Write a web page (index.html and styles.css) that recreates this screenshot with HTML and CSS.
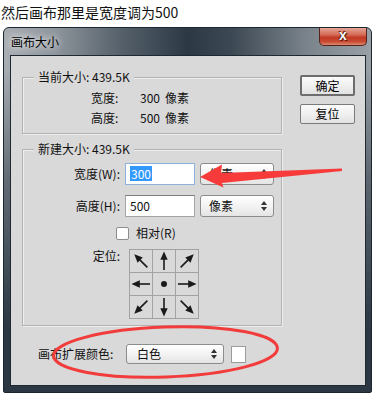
FILE: index.html
```html
<!DOCTYPE html>
<html lang="zh-CN">
<head>
<meta charset="utf-8">
<title>画布大小</title>
<link rel="stylesheet" href="styles.css">
</head>
<body>
<svg class="defs" width="0" height="0" aria-hidden="true">
  <defs>
    <g id="arr">
      <polygon points="11,1.5 7.3,9.8 14.7,9.8" fill="#1a1a1a"/>
      <line x1="11" y1="9" x2="11" y2="20" stroke="#1a1a1a" stroke-width="1.6"/>
    </g>
    <g id="updown">
      <polygon points="3,0 6,4 0,4" fill="#333"/>
      <polygon points="0,6 6,6 3,10" fill="#333"/>
    </g>
  </defs>
</svg>

<div class="caption">然后画布那里是宽度调为500</div>

<div class="window">
  <div class="titlebar">
    <span class="title">画布大小</span>
    <span class="close">x</span>
  </div>
  <div class="client">
    <div class="main">
      <div class="group g1">
        <span class="legend">当前大小: 439.5K</span>
        <div class="info-row"><span class="info-lbl">宽度:</span><span class="num">300</span><span>像素</span></div>
        <div class="info-row"><span class="info-lbl">高度:</span><span class="num">500</span><span>像素</span></div>
      </div>

      <div class="group g2">
        <span class="legend">新建大小: 439.5K</span>
        <div class="form-row">
          <span class="lbl">宽度(W):</span>
          <div class="input focus"><span class="hl">300</span></div>
          <div class="select unit"><span class="val">像素</span><svg class="ud" viewBox="0 0 6 10"><use href="#updown"/></svg></div>
        </div>
        <div class="form-row r2">
          <span class="lbl">高度(H):</span>
          <div class="input"><span>500</span></div>
          <div class="select unit"><span class="val">像素</span><svg class="ud" viewBox="0 0 6 10"><use href="#updown"/></svg></div>
        </div>
        <div class="check-row">
          <span class="checkbox"></span>
          <span class="check-label">相对(R)</span>
        </div>
        <div class="anchor-row">
          <span class="lbl">定位:</span>
          <div class="grid">
            <div class="cell"><svg viewBox="0 0 22 22"><use href="#arr" transform="rotate(-45 11 11)"/></svg></div>
            <div class="cell"><svg viewBox="0 0 22 22"><use href="#arr"/></svg></div>
            <div class="cell"><svg viewBox="0 0 22 22"><use href="#arr" transform="rotate(45 11 11)"/></svg></div>
            <div class="cell"><svg viewBox="0 0 22 22"><use href="#arr" transform="rotate(-90 11 11)"/></svg></div>
            <div class="cell"><svg viewBox="0 0 22 22"><circle cx="11" cy="11" r="3" fill="#1a1a1a"/></svg></div>
            <div class="cell"><svg viewBox="0 0 22 22"><use href="#arr" transform="rotate(90 11 11)"/></svg></div>
            <div class="cell"><svg viewBox="0 0 22 22"><use href="#arr" transform="rotate(-135 11 11)"/></svg></div>
            <div class="cell"><svg viewBox="0 0 22 22"><use href="#arr" transform="rotate(180 11 11)"/></svg></div>
            <div class="cell"><svg viewBox="0 0 22 22"><use href="#arr" transform="rotate(135 11 11)"/></svg></div>
          </div>
        </div>
      </div>

      <div class="ext-row">
        <span class="ext-lbl">画布扩展颜色:</span>
        <div class="select color"><span class="val">白色</span><svg class="ud" viewBox="0 0 6 10"><use href="#updown"/></svg></div>
        <span class="swatch"></span>
      </div>
    </div>

    <div class="buttons">
      <div class="btn default">确定</div>
      <div class="btn">复位</div>
    </div>
  </div>
</div>

<svg class="annot" width="373" height="395" viewBox="0 0 373 395" aria-hidden="true">
  <polygon points="200,177 222,164.5 221,173 342,168.5 342,171 222,183 223.5,187.5" fill="#f73b3b"/>
  <ellipse cx="165.5" cy="352" rx="112" ry="25" transform="rotate(-2 165.5 352)" fill="none" stroke="#f23c3c" stroke-width="3"/>
</svg>
</body>
</html>
```

FILE: styles.css
```css
* { box-sizing: border-box; }

html, body {
  margin: 0;
  padding: 0;
  background: #ffffff;
}

body {
  position: relative;
  width: 373px;
  height: 395px;
  overflow: hidden;
  font-family: "Noto Sans CJK SC", "Noto Sans", sans-serif;
  font-size: 12px;
  color: #111;
}

.defs { position: absolute; width: 0; height: 0; }

.caption {
  height: 27px;
  padding-left: 1px;
  font-size: 14px;
  line-height: 24px;
  color: #111;
}

.window {
  margin-left: 3px;
  width: 369px;
  height: 366px;
  border-radius: 6px 6px 2px 2px;
  border: 1px solid #1d2731;
  background:
    linear-gradient(to bottom, rgba(44,56,68,0) 0, rgba(44,56,68,0) 40px, rgba(44,56,68,0.55) 150px, #2b3743 300px),
    linear-gradient(90deg, #a9aeb3 0%, #8e959c 14%, #55606a 32%, #2c3945 50%, #3c4853 62%, #79828a 82%, #9aa0a6 100%);
  display: flex;
  flex-direction: column;
}

.titlebar {
  height: 27px;
  display: flex;
  align-items: flex-start;
  justify-content: space-between;
}

.title {
  margin-left: 7px;
  line-height: 27px;
  font-size: 12px;
  color: #000;
  text-shadow: 0 0 6px rgba(255,255,255,0.9), 0 0 10px rgba(255,255,255,0.7);
}

.close {
  width: 48px;
  height: 18px;
  margin-right: 4px;
  border: 1px solid #52231c;
  border-top: none;
  border-radius: 0 0 5px 5px;
  background: linear-gradient(to bottom, #e4a697 0%, #d56a55 40%, #c23a24 55%, #c84a32 80%, #de8a6e 100%);
  color: #fff;
  font-family: "Liberation Sans", Arial, sans-serif;
  font-weight: bold;
  font-size: 14px;
  line-height: 15px;
  text-align: center;
  text-shadow: 0 0 1px #2a0a05, 1px 1px 0 #5a1a10, -1px -1px 0 #7a2a1a;
}

.client {
  margin-left: 6px;
  width: 356px;
  height: 331px;
  border: 1px solid #1e2933;
  background: #d9d9d9;
  display: flex;
  align-items: flex-start;
  padding: 21px 0 0 11px;
}

.main {
  width: 260px;
  display: flex;
  flex-direction: column;
}

.group {
  position: relative;
  width: 260px;
  border: 1px solid #b3b3b3;
  box-shadow: inset 1px 1px 0 #eeeeee, 1px 1px 0 #eeeeee;
}

.legend {
  position: absolute;
  top: -9px;
  left: 11px;
  padding: 0 4px;
  background: #d9d9d9;
  line-height: 16px;
  white-space: nowrap;
}

.g1 {
  height: 57px;
  padding: 10px 0 0 68px;
}

.info-row {
  display: flex;
  height: 20px;
  line-height: 20px;
  white-space: nowrap;
}

.info-lbl {
  width: 49px;
}

.num {
  margin-right: 5px;
}

.g2 {
  margin-top: 15px;
  height: 177px;
  padding-top: 13px;
  display: flex;
  flex-direction: column;
}

.form-row {
  display: flex;
  align-items: center;
  height: 22px;
}

.r2 { margin-top: 10px; }

.lbl {
  width: 97px;
  text-align: right;
  white-space: nowrap;
  line-height: 16px;
}

.input {
  width: 70px;
  height: 22px;
  margin-left: 5px;
  background: #fff;
  border: 1px solid #a4a4a4;
  border-top-color: #7f7f7f;
  padding: 2px 0 0 4px;
  line-height: 16px;
}

.input.focus {
  border-color: #8fb2db;
}

.hl {
  display: inline-block;
  background: #3399ff;
  color: #fff;
  line-height: 15px;
  padding: 0 1px;
}

.select {
  height: 22px;
  border: 1px solid #8c8c8c;
  border-radius: 3px;
  background: linear-gradient(to bottom, #ffffff 0%, #f3f3f3 50%, #e4e4e4 100%);
  display: flex;
  align-items: center;
  justify-content: space-between;
  line-height: 16px;
}

.unit {
  width: 74px;
  margin-left: 5px;
  padding: 0 6px 0 8px;
}

.ud {
  width: 6px;
  height: 10px;
}

.check-row {
  display: flex;
  align-items: center;
  height: 14px;
  margin-top: 9px;
  padding-left: 93px;
}

.checkbox {
  width: 13px;
  height: 13px;
  background: #fff;
  border: 1px solid #8e8e8e;
  border-radius: 2px;
}

.check-label {
  margin-left: 7px;
  line-height: 16px;
}

.anchor-row {
  display: flex;
  align-items: flex-start;
  margin-top: 9px;
}

.anchor-row .lbl {
  line-height: 14px;
}

.grid {
  margin-left: 9px;
  display: grid;
  grid-template-columns: repeat(3, 23px);
  grid-auto-rows: 23px;
  border-left: 1px solid #a2a2a2;
  border-top: 1px solid #a2a2a2;
}

.cell {
  border-right: 1px solid #a2a2a2;
  border-bottom: 1px solid #a2a2a2;
}

.cell svg {
  display: block;
  width: 22px;
  height: 22px;
}

.ext-row {
  display: flex;
  align-items: center;
  margin-top: 18px;
  height: 20px;
  padding-left: 16px;
}

.ext-lbl {
  width: 83px;
  white-space: nowrap;
  line-height: 16px;
}

.color {
  width: 98px;
  height: 20px;
  margin-left: 5px;
  padding: 0 6px 0 10px;
}

.swatch {
  width: 15px;
  height: 17px;
  margin-left: 7px;
  background: #fff;
  border: 1px solid #9c9c9c;
}

.buttons {
  margin-left: 18px;
  margin-top: -2px;
  display: flex;
  flex-direction: column;
  gap: 8px;
}

.btn {
  width: 55px;
  height: 20px;
  border: 1px solid #7a7a7a;
  border-radius: 2px;
  background: linear-gradient(to bottom, #fafafa 0%, #f0f0f0 50%, #e2e2e2 100%);
  text-align: center;
  line-height: 18px;
  color: #000;
}

.btn.default {
  height: 21px;
  border: 2px solid #6d6d6d;
  line-height: 17px;
}

.annot {
  position: absolute;
  left: 0;
  top: 0;
  pointer-events: none;
}
```
